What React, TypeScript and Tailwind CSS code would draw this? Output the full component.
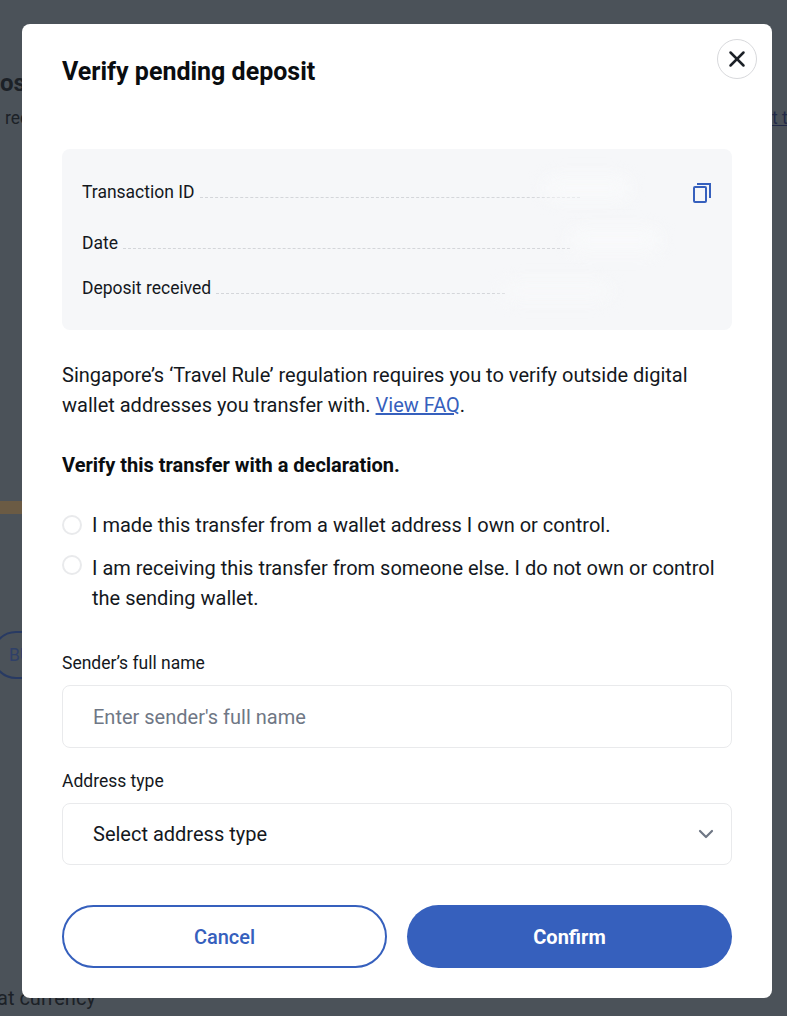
import { X, ChevronDown } from 'lucide-react';

function DetailRow({ label, lineEnd, className }: { label: string; lineEnd: string; className: string }) {
  return (
    <div className={`flex items-end ${className}`}>
      <span className="text-[17.5px] leading-[24px] text-[#14181d] whitespace-nowrap">{label}</span>
      <div className={`ml-[5px] mb-[6px] border-b border-dashed border-[#d4d6da] ${lineEnd}`} />
    </div>
  );
}

function Radio({ className = '' }: { className?: string }) {
  return <div className={`w-5 h-5 rounded-full border-2 border-[#e9eaec] bg-white shrink-0 ${className}`} />;
}

export default function App() {
  return (
    <div className="relative w-[787px] h-[1016px] overflow-hidden bg-[#4b5259] font-['Roboto',sans-serif]">
      {/* page behind the dialog */}
      <div className="absolute left-0 top-[68px] text-[24px] leading-[30px] font-bold text-[#1c2127] whitespace-nowrap">os</div>
      <div className="absolute left-[5px] top-[106px] text-[17.5px] leading-[24px] text-[#1c2127]">rec</div>
      <div className="absolute left-[772px] top-[106px] text-[17.5px] leading-[24px] text-[#222a48] underline whitespace-nowrap">t t</div>
      <div className="absolute left-0 top-[501px] w-[22px] h-[13px] bg-[#6b5b44]" />
      <div className="absolute left-[-8px] top-[631px] w-[60px] h-[48px] rounded-full border-2 border-[#283a63] pl-[15px] text-[17.5px] leading-[44px] text-[#2f4068]">
        BU
      </div>
      <div className="absolute left-[-3px] top-[986px] text-[20px] leading-[24px] text-[#1c2127] whitespace-nowrap">at currency</div>

      <div className="absolute inset-0 pl-[22px] pr-[15px] pt-[24px]">
        <div className="relative h-[974px] rounded-[8px] bg-white px-[40px] pt-[28px]">
          <button className="absolute right-[15px] top-[15px] w-10 h-10 rounded-full border border-[#d8d9dc] bg-white flex items-center justify-center text-[#1c2127]">
            <X size={26} strokeWidth={2.3} />
          </button>

          <h2 className="text-[25px] leading-[40px] font-bold text-[#0a0d10]">Verify pending deposit</h2>

          <div className="relative mt-[57px] h-[181px] rounded-[8px] bg-[#f6f7f9] px-5 pt-[31px] overflow-hidden">
            <DetailRow label="Transaction ID" lineEnd="w-[380px]" className="h-6" />
            <DetailRow label="Date" lineEnd="w-[447px]" className="h-6 mt-[27px]" />
            <DetailRow label="Deposit received" lineEnd="w-[289px]" className="h-6 mt-[21px]" />
            {/* smudged-out values */}
            <div className="absolute left-[480px] top-[26px] w-[90px] h-[26px] rounded-full bg-[#f9fafb] opacity-80 blur-sm" />
            <div className="absolute left-[505px] top-[78px] w-[95px] h-[26px] rounded-full bg-[#f9fafb] opacity-80 blur-sm" />
            <div className="absolute left-[440px] top-[132px] w-[110px] h-[20px] rounded-full bg-[#f8f9fa] opacity-80 blur-sm" />
            <svg className="absolute left-[630px] top-[33px]" width="20" height="22" viewBox="0 0 20 22" fill="none" stroke="#3660bd" strokeWidth="2">
              <rect x="2" y="5" width="12" height="15" rx="1" />
              <path d="M5 2h13v14" />
            </svg>
          </div>

          <p className="mt-[30px] text-[20px] leading-[30px] text-[#14181d]">
            Singapore’s ‘Travel Rule’ regulation requires you to verify outside digital wallet addresses you transfer with.{' '}
            <a className="text-[#3660bd] underline">View FAQ</a>.
          </p>

          <p className="mt-[30px] text-[20px] leading-[30px] font-bold text-[#0a0d10]">Verify this transfer with a declaration.</p>

          <div className="mt-[30px] flex gap-[10px] items-center h-[30px]">
            <Radio />
            <span className="text-[20px] leading-[30px] text-[#14181d]">I made this transfer from a wallet address I own or control.</span>
          </div>
          <div className="mt-[13px] flex gap-[10px] items-start">
            <Radio className="mt-[2px]" />
            <span className="text-[20px] leading-[30px] text-[#14181d]">
              I am receiving this transfer from someone else. I do not own or control the sending wallet.
            </span>
          </div>

          <label className="block mt-[38px] text-[17.5px] leading-[24px] text-[#14181d]">Sender’s full name</label>
          <div className="mt-[10px] h-[63px] rounded-[8px] border border-[#e9eaec] flex items-center px-[30px] text-[20px] text-[#6f7785]">
            Enter sender's full name
          </div>

          <label className="block mt-[21px] text-[17.5px] leading-[24px] text-[#14181d]">Address type</label>
          <div className="mt-[10px] h-[62px] rounded-[8px] border border-[#e9eaec] flex items-center justify-between pl-[30px] pr-[13px] text-[20px] text-[#14181d]">
            Select address type
            <ChevronDown size={24} strokeWidth={2.2} className="text-[#6f7785]" />
          </div>

          <div className="mt-[40px] grid grid-cols-2 gap-5">
            <button className="h-[63px] rounded-full border-2 border-[#3660bd] bg-white text-[20px] font-medium text-[#3660bd]">Cancel</button>
            <button className="h-[63px] rounded-full bg-[#3660bd] text-[20px] font-bold text-white">Confirm</button>
          </div>
        </div>
      </div>
    </div>
  );
}
